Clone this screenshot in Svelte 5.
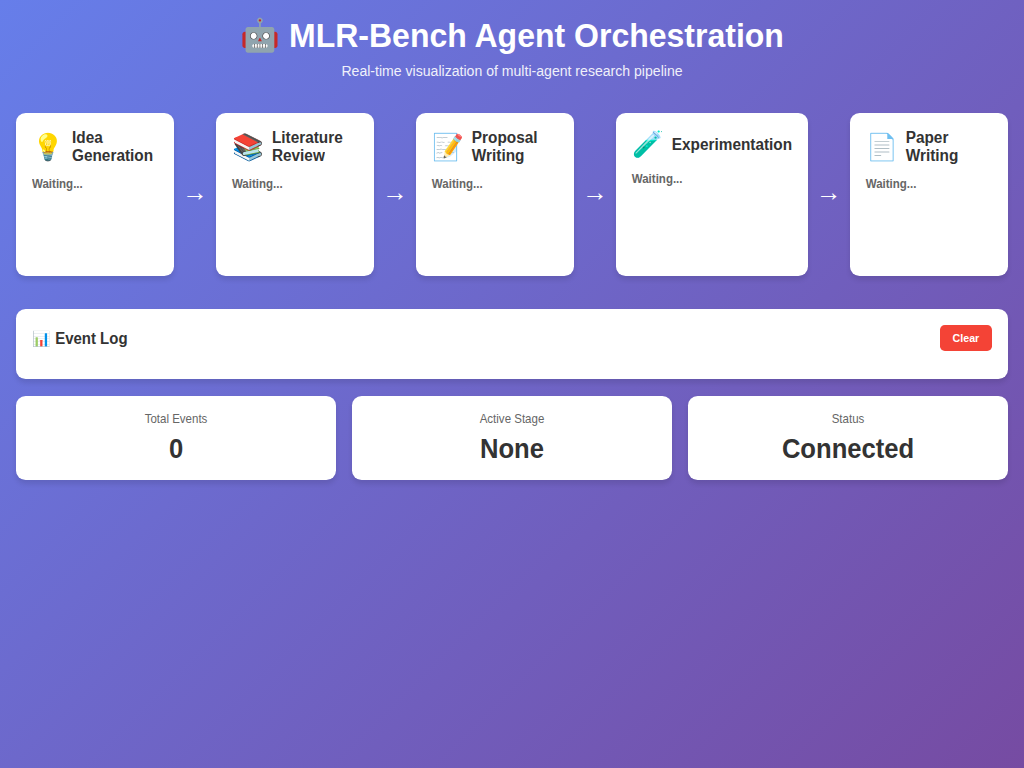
<script>
  const stages = [
    { icon: '💡', name: 'Idea Generation' },
    { icon: '📚', name: 'Literature Review' },
    { icon: '📝', name: 'Proposal Writing' },
    { icon: '🧪', name: 'Experimentation' },
    { icon: '📄', name: 'Paper Writing' }
  ];
  const stats = [
    { label: 'Total Events', value: '0' },
    { label: 'Active Stage', value: 'None' },
    { label: 'Status', value: 'Connected' }
  ];
</script>

<div class="page">
  <header>
    <h1>🤖 <span class="title">MLR-Bench Agent Orchestration</span></h1>
    <p>Real-time visualization of multi-agent research pipeline</p>
  </header>

  <div class="pipeline">
    {#each stages as stage, i}
      {#if i > 0}<div class="arrow">→</div>{/if}
      <section class="stage">
        <div class="stage-head">
          <span class="icon">{stage.icon}</span>
          <h3>{#each stage.name.split(' ') as word}<span class="word">{word}</span>{' '}{/each}</h3>
        </div>
        <div class="status">Waiting...</div>
      </section>
    {/each}
  </div>

  <section class="log">
    <h2>📊 <span class="word">Event Log</span></h2>
    <button><span class="word">Clear</span></button>
  </section>

  <div class="stats">
    {#each stats as stat}
      <div class="stat">
        <div class="label">{stat.label}</div>
        <div class="value">{stat.value}</div>
      </div>
    {/each}
  </div>
</div>

<style>
  :global(body) {
    margin: 0;
  }
  .page {
    box-sizing: border-box;
    min-height: 100vh;
    padding: 16px;
    font-family: 'Liberation Sans', Arial, sans-serif;
    color: #333;
    background: linear-gradient(135deg, #667eea 0%, #764ba2 100%);
  }
  .page :global(*) {
    box-sizing: border-box;
  }
  header {
    text-align: center;
    color: white;
    margin-bottom: 32.8px;
  }
  h1 {
    margin: 0 0 8px;
    font-size: 32px;
    line-height: 39px;
  }
  .title {
    display: inline-block;
    transform: scaleY(1.06);
  }
  .word {
    display: inline-block;
    transform: scaleY(1.08);
  }
  header p {
    margin: 0;
    font-size: 14.08px;
    line-height: 17px;
    opacity: 0.9;
    transform: scaleY(1.1);
  }
  .pipeline {
    display: flex;
    align-items: center;
    margin-bottom: 32.4px;
  }
  .stage {
    flex: 1;
    min-height: 163.6px;
    padding: 16.4px 16px;
    background: white;
    border-radius: 9.6px;
    box-shadow: 0 3.2px 4.8px rgba(0, 0, 0, 0.1);
  }
  .stage-head {
    display: flex;
    align-items: center;
    gap: 8px;
    margin-bottom: 12.4px;
  }
  .icon {
    font-size: 25.6px;
    line-height: 31px;
    transform: scaleY(1.02);
  }
  h3 {
    margin: 0;
    font-size: 15.36px;
    line-height: 18px;
  }
  .status {
    font-size: 11.52px;
    font-weight: 600;
    line-height: 13px;
    color: #666;
    transform: scaleY(1.13);
  }
  .arrow {
    padding: 0 8px 5px;
    font-size: 25.6px;
    color: white;
  }
  .log {
    display: flex;
    justify-content: space-between;
    align-items: center;
    padding: 16px 16px 28.4px;
    margin-bottom: 16.8px;
    background: white;
    border-radius: 9.6px;
    box-shadow: 0 3.2px 4.8px rgba(0, 0, 0, 0.1);
  }
  h2 {
    margin: 0;
    padding-top: 2px;
    font-size: 14.98px;
    line-height: 18px;
  }
  button {
    padding: 0 12.8px;
    height: 26px;
    border: 0;
    border-radius: 4.8px;
    background: #f44336;
    color: white;
    font: 600 10.67px 'Liberation Sans', Arial, sans-serif;
  }
  .stats {
    display: grid;
    grid-template-columns: repeat(3, 1fr);
    gap: 16px;
  }
  .stat {
    padding: 16px;
    text-align: center;
    background: white;
    border-radius: 9.6px;
    box-shadow: 0 3.2px 4.8px rgba(0, 0, 0, 0.1);
  }
  .label {
    margin-bottom: 7px;
    font-size: 11.52px;
    line-height: 14px;
    color: #666;
    transform: scaleY(1.1);
  }
  .value {
    padding-bottom: 1px;
    font-size: 25.6px;
    line-height: 30px;
    font-weight: bold;
    transform: scaleY(1.06);
  }
</style>
